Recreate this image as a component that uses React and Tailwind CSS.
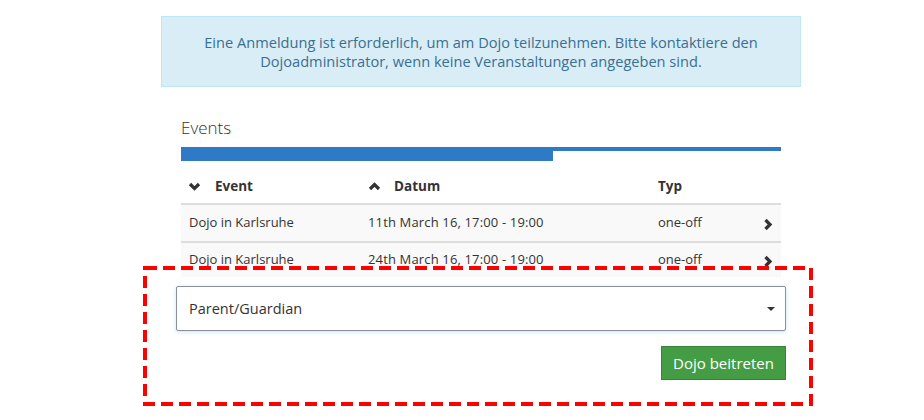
import React from "react";

const events = [
  { name: "Dojo in Karlsruhe", date: "11th March 16, 17:00 - 19:00", type: "one-off" },
  { name: "Dojo in Karlsruhe", date: "24th March 16, 17:00 - 19:00", type: "one-off" },
];

// dicke Chevrons wie in den Glyphicons
const Chevron = ({ dir }) => {
  const pts = {
    down: "2,3 6.5,7.5 11,3",
    up: "2,8 6.5,3.5 11,8",
    right: "3.5,2 8,6.5 3.5,11",
  }[dir];
  return (
    <svg width="13" height="11" viewBox="0 0 13 11" className="shrink-0">
      <polyline points={pts} fill="none" stroke="#333" strokeWidth="3.2" strokeLinecap="butt" strokeLinejoin="miter" />
    </svg>
  );
};

const ChevronRight = () => (
  <svg width="10" height="13" viewBox="0 0 10 13" className="shrink-0">
    <polyline points="2.5,2 7,6.5 2.5,11" fill="none" stroke="#333" strokeWidth="3.2" strokeLinejoin="miter" />
  </svg>
);

const App = () => {
  return (
    <div
      className="relative w-[924px] h-[420px] bg-white text-[#333] overflow-hidden"
      style={{ fontFamily: '"Open Sans", "Noto Sans", sans-serif' }}
    >
      <div className="pt-[16px] pl-[161px]">
        {/* Hinweis */}
        <div className="w-[640px] h-[71px] bg-[#d9edf7] border border-[#bce8f1] text-[#3a6f92] text-[14.6px] leading-[19px] text-center flex items-center justify-center px-4">
          <p>
            Eine Anmeldung ist erforderlich, um am Dojo teilzunehmen. Bitte kontaktiere den
            <br />
            Dojoadministrator, wenn keine Veranstaltungen angegeben sind.
          </p>
        </div>

        <div className="ml-[20px] w-[600px]">
          <h3 className="mt-[30px] text-[17px] font-light leading-[22px] text-[#333]">Events</h3>

          {/* Fortschritt */}
          <div className="mt-[8px] h-[14px] relative">
            <div className="h-[4px] w-full bg-[#2f7ac6]" />
            <div className="absolute left-0 top-0 h-[14px] w-[372px] bg-[#2f7ac6]" />
          </div>

          {/* Tabelle */}
          <div className="mt-[8px] text-[13px]">
            <div className="flex items-center h-[36px] border-b-2 border-[#ddd] font-bold text-[13.5px]">
              <div className="w-[187px] flex items-center pl-[7px] gap-[14px]">
                <Chevron dir="down" />
                <span>Event</span>
              </div>
              <div className="w-[290px] flex items-center gap-[13px]">
                <Chevron dir="up" />
                <span>Datum</span>
              </div>
              <div className="flex-1">Typ</div>
            </div>
            {events.map((ev, i) => (
              <div
                key={i}
                className={`flex items-center h-[36px] ${i === 0 ? "" : "border-t-2 border-[#ddd]"} bg-[#f9f9f9]`}
              >
                <div className="w-[187px] pl-[8px]">{ev.name}</div>
                <div className="w-[290px] tracking-[0.15px]">{ev.date}</div>
                <div className="flex-1">{ev.type}</div>
                <span className="mr-[8px] mt-[3px]">
                  <ChevronRight />
                </span>
              </div>
            ))}
          </div>
        </div>

        {/* Rolle */}
        <div className="ml-[15px] w-[610px] mt-[9px]">
          <div className="h-[45px] border border-[#8a9099] rounded-[2px] shadow-[0_1px_4px_rgba(102,175,233,0.35)] flex items-center justify-between pl-[12px] pr-[10px] text-[14.5px] bg-white">
            <span>Parent/Guardian</span>
            <span className="w-0 h-0 border-l-[4px] border-r-[4px] border-t-[4px] border-l-transparent border-r-transparent border-t-[#333]" />
          </div>
          <div className="flex justify-end mt-[15px]">
            <button className="h-[34px] w-[125px] bg-[#449d44] border border-[#398439] text-white text-[15px]">
              Dojo beitreten
            </button>
          </div>
        </div>
      </div>

      {/* Markierung */}
      <svg className="absolute left-[143px] top-[266px]" width="670" height="140">
        <rect
          x="2"
          y="2"
          width="666"
          height="136"
          fill="none"
          stroke="#ff0000"
          strokeWidth="4"
          strokeDasharray="12 6"
        />
      </svg>
    </div>
  );
};

export default App;
